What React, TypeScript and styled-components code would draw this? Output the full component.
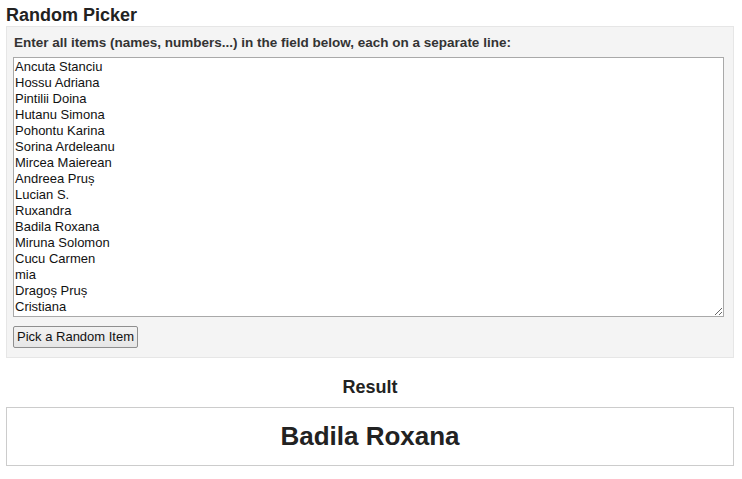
import * as React from 'react'
import styled, { createGlobalStyle } from 'styled-components'

const GlobalStyle = createGlobalStyle`
  body {
    margin: 0;
    background: #fff;
    font-family: 'Liberation Sans', Arial, sans-serif;
    color: #222;
  }
`

const Page = styled.div`
  padding: 0 8px 0 6px;
`
const Title = styled.h1`
  margin: 5px 0 0;
  font-size: 18px;
  line-height: 21px;
  font-weight: bold;
  color: #222;
`
const Panel = styled.div`
  background: #f4f4f4;
  border: 1px solid #e6e6e6;
  padding: 8px 9px 9px 6px;
`
const Label = styled.label`
  display: block;
  font-size: 13.5px;
  line-height: 16px;
  font-weight: bold;
  color: #333;
  margin: 0 0 6px 1px;
`
const Items = styled.textarea`
  display: block;
  box-sizing: border-box;
  width: 100%;
  height: 260px;
  margin: 0;
  padding: 1px 2px 1px 1px;
  border: 1px solid #a9a9a9;
  background: #fff;
  color: #111;
  font-family: 'Liberation Sans', Arial, sans-serif;
  font-size: 13px;
  line-height: 16px;
  overflow: hidden;
  outline: none;
`
const PickButton = styled.button`
  display: block;
  margin-top: 9px;
  padding: 2px 3px;
  border: 1px solid #8f8f8f;
  border-radius: 2px;
  background: linear-gradient(#f2f2f2, #e6e6e6);
  color: #111;
  font-family: 'Liberation Sans', Arial, sans-serif;
  font-size: 13px;
  line-height: 16px;
`
const ResultTitle = styled.h2`
  margin: 19px 0 9px;
  text-align: center;
  font-size: 18px;
  line-height: 21px;
  font-weight: bold;
  color: #222;
`
const ResultBox = styled.div`
  border: 1px solid #cccccc;
  padding: 13px 0 14px;
  text-align: center;
  font-size: 26px;
  line-height: 30px;
  font-weight: bold;
  color: #222;
`

const names = [
  'Ancuta Stanciu',
  'Hossu Adriana',
  'Pintilii Doina',
  'Hutanu Simona',
  'Pohontu Karina',
  'Sorina Ardeleanu',
  'Mircea Maierean',
  'Andreea Pruș',
  'Lucian S.',
  'Ruxandra',
  'Badila Roxana',
  'Miruna Solomon',
  'Cucu Carmen',
  'mia',
  'Dragoș Pruș',
  'Cristiana',
]

const App: React.FC = () => {
  const [text, setText] = React.useState(names.join('\n'))
  const [result, setResult] = React.useState('Badila Roxana')

  const pick = () => {
    const items = text.split('\n').map(s => s.trim()).filter(Boolean)
    if (items.length) setResult(items[Math.floor(Math.random() * items.length)])
  }

  return (
    <Page>
      <GlobalStyle />
      <Title>Random Picker</Title>
      <Panel>
        <Label htmlFor="items">
          Enter all items (names, numbers...) in the field below, each on a separate line:
        </Label>
        <Items id="items" value={text} onChange={e => setText(e.target.value)} spellCheck={false} />
        <PickButton onClick={pick}>Pick a Random Item</PickButton>
      </Panel>
      <ResultTitle>Result</ResultTitle>
      <ResultBox>{result}</ResultBox>
    </Page>
  )
}

export default App
